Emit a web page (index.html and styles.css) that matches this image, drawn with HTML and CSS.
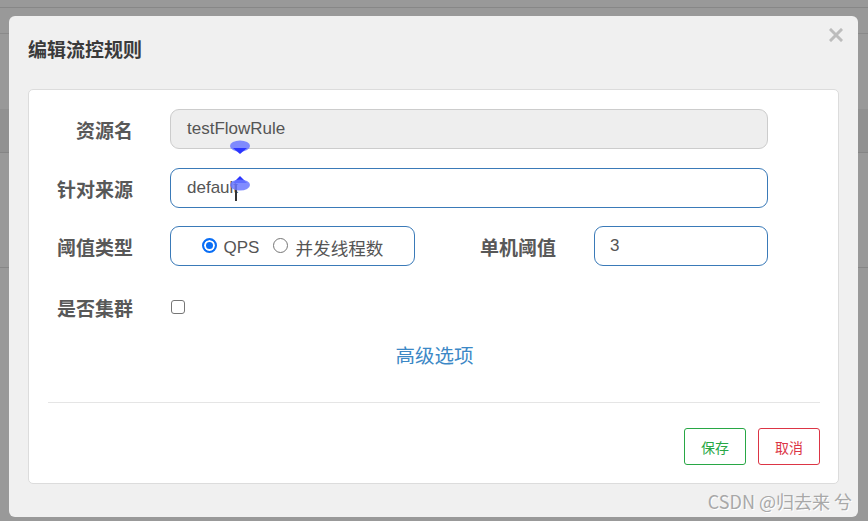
FILE: index.html
```html
<!DOCTYPE html>
<html lang="zh">
<head>
<meta charset="utf-8">
<title>编辑流控规则</title>
<link rel="stylesheet" href="styles.css">
</head>
<body>
<div class="backdrop">
  <div class="modal">
    <div class="modal-head">
      <h4 class="modal-title">编辑流控规则</h4>
      <svg class="close" width="14" height="14" viewBox="0 0 14 14"><path d="M2 2 L12 12 M12 2 L2 12" stroke="#bcbcbc" stroke-width="3" stroke-linecap="square"/></svg>
    </div>
    <div class="card">
      <div class="row">
        <label class="lbl">资源名</label>
        <div class="input disabled wide">testFlowRule</div>
      </div>
      <div class="row r2">
        <label class="lbl">针对来源</label>
        <div class="input active wide">default<span class="caret"></span></div>
      </div>
      <div class="row r3">
        <label class="lbl">阈值类型</label>
        <div class="radio-box">
          <span class="radio on"></span><span class="rtext">QPS</span>
          <span class="radio"></span><span class="rtext cjk">并发线程数</span>
        </div>
        <label class="lbl lbl2">单机阈值</label>
        <div class="input active narrow">3</div>
      </div>
      <div class="row r4">
        <label class="lbl">是否集群</label>
        <span class="check"></span>
      </div>
      <div class="adv"><a class="adv-link">高级选项</a></div>
      <div class="divider"></div>
      <div class="actions">
        <button class="btn save">保存</button>
        <button class="btn cancel">取消</button>
      </div>
    </div>
    <div class="watermark">CSDN @归去来 兮</div>
  </div>
</div>
<div class="pin pin-down"><svg width="22" height="16" viewBox="0 0 22 16"><ellipse cx="11" cy="6" rx="10" ry="5.5" fill="#6b78ff" fill-opacity="0.85"/><path d="M4 8 L11 14 L18 8 Z" fill="#2b35ff"/></svg></div>
<div class="pin pin-up"><svg width="22" height="18" viewBox="0 0 22 18"><path d="M4 8 L11 1 L18 8 Z" fill="#2b35ff"/><ellipse cx="11" cy="10" rx="10" ry="5.5" fill="#6b78ff" fill-opacity="0.85"/></svg></div>
</body>
</html>
```
FILE: styles.css
```css
* { box-sizing: border-box; }
html, body { margin: 0; padding: 0; }
body {
  width: 868px;
  height: 521px;
  overflow: hidden;
  position: relative;
  font-family: "Liberation Sans", Arial, "Noto Sans CJK SC", sans-serif;
  background-color: #999999;
  background-image:
    linear-gradient(to bottom, transparent 7px, #878787 7px, #878787 8px, transparent 8px),
    linear-gradient(to bottom, transparent 33px, #8a8a8a 33px, #8a8a8a 34px, transparent 34px),
    linear-gradient(to bottom, transparent 109px, #919191 109px, #919191 152px, #858585 152px, #858585 153px, transparent 153px),
    linear-gradient(to bottom, transparent 267px, #878787 267px, #878787 268px, transparent 268px);
}
.backdrop {
  padding: 16px 10px 0 9px;
}
.modal {
  position: relative;
  width: 849px;
  height: 501px;
  background: #f0f0f0;
  border-radius: 6px;
  padding: 21px 19px 0 19px;
}
.modal-head {
  display: flex;
  justify-content: space-between;
  align-items: flex-start;
  height: 24px;
}
.modal-title {
  margin: 0;
  font-family: "Noto Sans CJK SC", sans-serif;
  font-weight: 700;
  font-size: 19px;
  line-height: 24px;
  color: #3a3a3a;
}
.close {
  margin-top: -9px;
  margin-right: -4px;
}
.card {
  margin-top: 28px;
  background: #fff;
  border: 1px solid #dcdcdc;
  border-radius: 5px;
  padding: 19px 18px 18px 19px;
  height: 395px;
}
.row {
  display: flex;
  align-items: center;
  height: 40px;
}
.r2 { margin-top: 19px; }
.r3 { margin-top: 18px; }
.r4 { margin-top: 21px; }
.lbl {
  width: 85px;
  margin-right: 37px;
  text-align: right;
  font-family: "Noto Sans CJK SC", sans-serif;
  font-weight: 700;
  font-size: 19px;
  color: #585858;
  white-space: nowrap;
}
.lbl2 {
  width: 141px;
  margin-right: 38px;
}
.input {
  height: 40px;
  border-radius: 9px;
  padding-left: 16px;
  display: flex;
  align-items: center;
  font-size: 17px;
  color: #555;
  position: relative;
}
.wide { width: 598px; }
.narrow { width: 174px; padding-left: 15px; }
.disabled {
  background: #eeeeee;
  border: 1px solid #cccccc;
}
.active {
  background: #fff;
  border: 1px solid #3a7ab8;
}
.caret {
  display: inline-block;
  width: 2px;
  height: 17px;
  background: #333;
  margin-left: -3px;
  margin-top: 8px;
}
.radio-box {
  width: 245px;
  height: 40px;
  border: 1px solid #3a7ab8;
  border-radius: 9px;
  display: flex;
  align-items: center;
  justify-content: center;
  font-size: 17px;
  color: #555;
  padding-top: 3px;
}
.radio {
  width: 15px;
  height: 15px;
  border-radius: 50%;
  border: 1px solid #767676;
  background: #fff;
  margin-right: 6px;
  margin-top: -4px;
}
.radio.on {
  border: 2px solid #0a6ef5;
  background: #0a6ef5;
  box-shadow: inset 0 0 0 2px #fff;
  margin-right: 7px;
}
.rtext { margin-right: 14px; }
.rtext.cjk {
  font-family: "Noto Sans CJK SC", sans-serif;
  font-size: 17.6px;
  margin-right: 0;
  margin-left: 1px;
}
.check {
  width: 14px;
  height: 14px;
  border: 1px solid #767676;
  border-radius: 3px;
  background: #fff;
  margin-left: 1px;
}
.adv {
  margin-top: 16px;
  height: 24px;
  text-align: center;
  line-height: 24px;
  padding-left: 1px;
}
.adv-link {
  font-family: "Noto Sans CJK SC", sans-serif;
  font-size: 19.5px;
  color: #3c88c6;
}
.divider {
  margin-top: 35px;
  height: 1px;
  background: #e5e5e5;
}
.actions {
  margin-top: 25px;
  display: flex;
  justify-content: flex-end;
  gap: 12px;
}
.btn {
  width: 62px;
  height: 37px;
  background: #fff;
  border-radius: 3px;
  font-family: "Noto Sans CJK SC", sans-serif;
  font-size: 14px;
  padding: 0;
}
.save { border: 1px solid #28a745; color: #28a745; }
.cancel { border: 1px solid #dc3545; color: #dc3545; }
.watermark {
  position: absolute;
  right: 6px;
  bottom: 3px;
  font-family: "Noto Sans CJK SC", sans-serif;
  font-size: 18px;
  color: #a8a8a8;
  text-shadow: 1px 1px 0 #fff;
}
.pin { position: absolute; line-height: 0; }
.pin-down { left: 229px; top: 140px; }
.pin-up { left: 229px; top: 175px; }
```
